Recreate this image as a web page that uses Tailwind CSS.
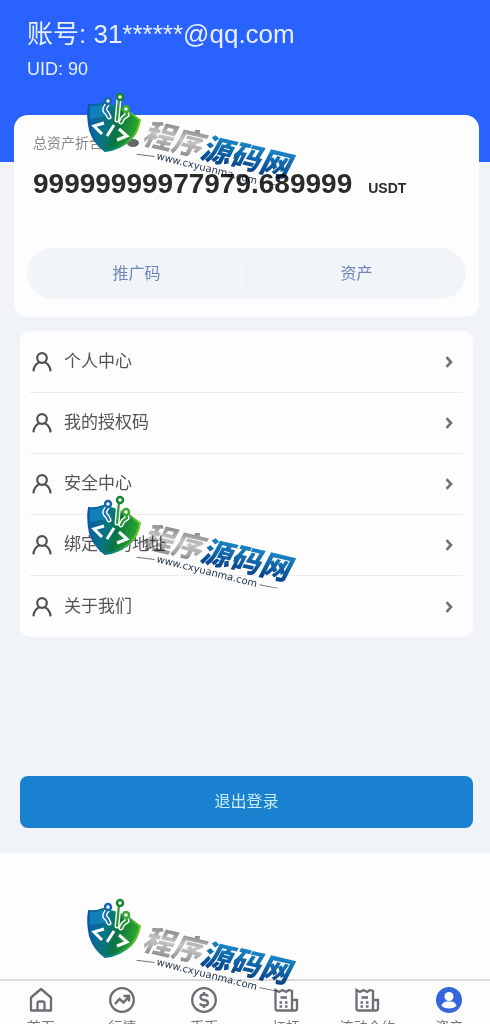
<!DOCTYPE html>
<html lang="zh-CN">
<head>
    <meta charset="UTF-8">
    <meta name="viewport" content="width=device-width, initial-scale=1.0">
    <title>个人中心</title>
    <script src="https://cdn.jsdelivr.net/npm/@tailwindcss/browser@4"></script>
</head>
<body class="relative h-screen flex flex-col overflow-hidden bg-[#fdfdfd] font-['Liberation_Sans','Noto_Sans_CJK_SC',sans-serif] text-[#555]">
    <!-- Shared icons -->
    <svg class="absolute w-0 h-0" aria-hidden="true">
        <symbol id="user" viewBox="0 0 20 20">
            <g fill="none" stroke="#505050" stroke-width="2.200" stroke-linecap="round">
                <circle cx="10" cy="6" r="4.800"/>
                <path d="M1.500 18.500C2 14.500 4 12 7 10.400M18.500 18.500C18 14.500 16 12 13 10.400"/>
            </g>
        </symbol>
        <symbol id="chevron" viewBox="0 0 8 12">
            <path d="M1.500 1.200L6 6L1.500 10.800" fill="none" stroke="#707070" stroke-width="2.600"/>
        </symbol>
        <symbol id="bill" viewBox="0 0 26 26">
            <g fill="none" stroke="#6d6d76" stroke-width="2.300">
                <path d="M19 23.500H4.500Q2.500 23.500 2.500 21.500V3L6 5L9.500 3L13 5L16 3L19 4V23.500H22Q24 23.500 24 21.500V13H19"/>
                <path d="M7.500 10.500H14M6.500 15.500H9M12 15.500H14.500M6.500 19.500H9M12 19.500H14.500"/>
            </g>
        </symbol>
        <symbol id="shield" viewBox="0 0 220 100">
            <defs>
                <linearGradient id="shieldFill" x1="0" y1="0" x2="1" y2="0.25">
                    <stop offset="0.1" stop-color="#0a62ad"/>
                    <stop offset="0.45" stop-color="#087580"/>
                    <stop offset="0.65" stop-color="#0b7440"/>
                    <stop offset="1" stop-color="#2aa52d"/>
                </linearGradient>
                <linearGradient id="shieldEdge" x1="0" y1="0" x2="1" y2="0">
                    <stop offset="0" stop-color="#0b55a8"/>
                    <stop offset="0.5" stop-color="#078a72"/>
                    <stop offset="1" stop-color="#70c824"/>
                </linearGradient>
            </defs>
            <path d="M9 16Q16 17 23 14L34 17L48 22Q54 27 60 31Q58 43 51 50Q41 60 25 62Q14 54 10 41Q7 27 9 16Z" fill="url(#shieldFill)" stroke="url(#shieldEdge)" stroke-width="2"/>
            <path d="M10 17Q17 18 22 15L27 27L10 30Z" fill="#1593c5" opacity="0.6"/>
            <g fill="none" stroke="#fff" stroke-width="5" stroke-linecap="round">
                <path d="M28 14L25 19Q24 22 27 24L29 28M39 10L37 31M46 22L47 26L43 29L41 33"/>
            </g>
            <g fill="none" stroke-width="2.200" stroke-linecap="round">
                <path d="M28 14L25 19Q24 22 27 24L29 28" stroke="#1b71b7"/>
                <path d="M39 10L37 31M46 22L47 26L43 29L41 33" stroke="#259b31"/>
            </g>
            <g fill="#fff" stroke-width="2.500">
                <circle cx="28" cy="12" r="3" stroke="#1765ae"/>
                <circle cx="40" cy="8" r="3" stroke="#14872f"/>
                <circle cx="46" cy="20" r="3" stroke="#39a934"/>
            </g>
            <path d="M24 34L14 37L22 45M34 36L27 47M39 40L47 47L37 51" fill="none" stroke="#fff" stroke-width="3"/>
        </symbol>
        <symbol id="brand" viewBox="0 0 220 100">
            <defs>
                <linearGradient id="silver" x1="0" y1="0" x2="0" y2="1">
                    <stop offset="0.2" stop-color="#858585"/>
                    <stop offset="0.5" stop-color="#c9c9c9"/>
                    <stop offset="0.9" stop-color="#8b8b8b"/>
                </linearGradient>
                <linearGradient id="blue" x1="0" y1="0" x2="0" y2="1">
                    <stop offset="0.2" stop-color="#1a8acb"/>
                    <stop offset="0.9" stop-color="#063f86"/>
                </linearGradient>
            </defs>
            <g transform="translate(61 54) rotate(13)" font-family="'Noto Sans CJK SC', sans-serif" font-weight="900" font-style="italic">
                <text x="0" y="0" font-size="30" fill="url(#silver)">程序</text>
                <text x="60" y="1" font-size="30" fill="url(#blue)">源码网</text>
            </g>
            <g transform="translate(76 70) rotate(14)">
                <text x="0" y="0" font-family="'DejaVu Sans', sans-serif" font-size="10" fill="#26384c">www.cxyuanma.com</text>
                <path d="M-20 0L-2 -2M106 -3L124 -4" stroke="#777" stroke-width="1"/>
            </g>
        </symbol>
    </svg>

    <main class="flex-1 min-h-0">
        <div class="bg-[#f0f4f9] pb-[25px]">
            <header class="h-[162px] bg-[#2962ff] text-[#e6f0ff] pl-[27px] pt-[18px]">
                <h1 class="text-[26px] leading-8">账号: 31******@qq.com</h1>
                <p class="text-lg leading-6 mt-[7px]">UID: 90</p>
            </header>

            <section class="-mt-[47px] ml-[14px] mr-[11px] h-[202px] rounded-[14px] bg-[#fdfdfd] px-[13px] pt-[18px]">
                <div class="flex items-center gap-6 pl-[6px] text-sm leading-5 text-[#888]">
                    <span>总资产折合</span>
                    <svg class="w-3 h-2" viewBox="0 0 12 8"><ellipse cx="6" cy="4" rx="6" ry="4" fill="#666"/></svg>
                </div>
                <div class="flex items-baseline gap-4 pl-[6px] mt-[15px] font-bold text-[#2b2b2b]">
                    <span class="text-[28px] leading-8">99999999977979.689999</span>
                    <span class="text-sm">USDT</span>
                </div>
                <div class="mt-12 h-[51px] rounded-full bg-[#f1f4f9] flex items-center text-[#6f86b8]">
                    <button class="flex-1 h-full">推广码</button>
                    <span class="w-px h-6 bg-[#e9edf4]"></span>
                    <button class="flex-1 h-full">资产</button>
                </div>
            </section>

            <nav class="mt-[14px] ml-5 mr-[17px] rounded-[10px] bg-[#fdfdfd] px-[10px] pt-px text-[17px]">
                <a href="#" class="h-[61px] flex items-center gap-3 pl-[2px] pr-[10px] border-b border-[#e9ebed]">
                    <svg class="w-5 h-5"><use href="#user"/></svg>
                    <span class="flex-1">个人中心</span>
                    <svg class="w-2 h-3"><use href="#chevron"/></svg>
                </a>
                <a href="#" class="h-[61px] flex items-center gap-3 pl-[2px] pr-[10px] border-b border-[#e9ebed]">
                    <svg class="w-5 h-5"><use href="#user"/></svg>
                    <span class="flex-1">我的授权码</span>
                    <svg class="w-2 h-3"><use href="#chevron"/></svg>
                </a>
                <a href="#" class="h-[61px] flex items-center gap-3 pl-[2px] pr-[10px] border-b border-[#e9ebed]">
                    <svg class="w-5 h-5"><use href="#user"/></svg>
                    <span class="flex-1">安全中心</span>
                    <svg class="w-2 h-3"><use href="#chevron"/></svg>
                </a>
                <a href="#" class="h-[61px] flex items-center gap-3 pl-[2px] pr-[10px] border-b border-[#e9ebed]">
                    <svg class="w-5 h-5"><use href="#user"/></svg>
                    <span class="flex-1">绑定我的地址</span>
                    <svg class="w-2 h-3"><use href="#chevron"/></svg>
                </a>
                <a href="#" class="h-[61px] flex items-center gap-3 pl-[2px] pr-[10px]">
                    <svg class="w-5 h-5"><use href="#user"/></svg>
                    <span class="flex-1">关于我们</span>
                    <svg class="w-2 h-3"><use href="#chevron"/></svg>
                </a>
            </nav>

            <div class="mt-[139px] ml-5 mr-[17px]">
                <button class="w-full h-[52px] rounded-lg bg-[#1a80d0] text-[#c9ebf8]">退出登录</button>
            </div>
        </div>
    </main>

    <!-- Tab bar -->
    <nav class="shrink-0 h-[45px] overflow-hidden border-t-2 border-[#dcdcdc] bg-[#fdfdfd] grid grid-cols-6 text-sm leading-5 text-[#777]">
        <a href="#" class="flex flex-col items-center gap-1 pt-[6px]">
            <svg class="w-[26px] h-[26px] shrink-0" viewBox="0 0 26 26" fill="none" stroke="#6d6d76" stroke-width="2.300" stroke-linejoin="round">
                <path d="M3 23.500V10.500L13 2L23 10.500V23.500ZM9.500 23V16.500Q9.500 14.500 11.500 14.500H14.500Q16.500 14.500 16.500 16.500V23"/>
            </svg>
            <span>首页</span>
        </a>
        <a href="#" class="flex flex-col items-center gap-1 pt-[6px]">
            <svg class="w-[26px] h-[26px] shrink-0" viewBox="0 0 26 26" fill="none" stroke="#6d6d76" stroke-width="2.300">
                <circle cx="13" cy="13" r="11.800"/>
                <path d="M6 17L10.500 12L14.500 15.500L19.500 10M14.500 9H20V14.500" stroke-width="2.500"/>
            </svg>
            <span>行情</span>
        </a>
        <a href="#" class="flex flex-col items-center gap-1 pt-[6px]">
            <svg class="w-[26px] h-[26px] shrink-0" viewBox="0 0 26 26" fill="none" stroke="#6d6d76" stroke-width="2.300">
                <circle cx="13" cy="13" r="11.800"/>
                <path d="M17 9.500Q16 7.500 13 7.500Q9.500 7.500 9.500 10Q9.500 12.500 13 13Q17 13.500 17 16Q17 18.500 13 18.500Q10 18.500 9 16.500M13 5V8M13 18V21"/>
            </svg>
            <span>币币</span>
        </a>
        <a href="#" class="flex flex-col items-center gap-1 pt-[6px]">
            <svg class="w-[26px] h-[26px] shrink-0"><use href="#bill"/></svg>
            <span>杠杆</span>
        </a>
        <a href="#" class="flex flex-col items-center gap-1 pt-[6px]">
            <svg class="w-[26px] h-[26px] shrink-0"><use href="#bill"/></svg>
            <span>流动合约</span>
        </a>
        <a href="#" class="flex flex-col items-center gap-1 pt-[6px]">
            <svg class="w-[26px] h-[26px] shrink-0" viewBox="0 0 26 26">
                <circle cx="13" cy="13" r="13" fill="#3567dc"/>
                <circle cx="13" cy="9.500" r="4.500" fill="#fff"/>
                <path d="M5.500 19Q6 15.500 10 14.500H16Q20 15.500 20.500 19Q17 21.500 13 21.500Q9 21.500 5.500 19Z" fill="#fff"/>
            </svg>
            <span>资产</span>
        </a>
    </nav>

    <!-- Site watermark, repeated over the page -->
    <svg class="absolute left-20 top-[89px] w-[220px] h-[100px] mix-blend-multiply pointer-events-none"><use href="#brand"/></svg>
    <svg class="absolute left-20 top-[89px] w-[220px] h-[100px] pointer-events-none"><use href="#shield"/></svg>
    <svg class="absolute left-20 top-[492px] w-[220px] h-[100px] mix-blend-multiply pointer-events-none"><use href="#brand"/></svg>
    <svg class="absolute left-20 top-[492px] w-[220px] h-[100px] pointer-events-none"><use href="#shield"/></svg>
    <svg class="absolute left-20 top-[895px] w-[220px] h-[100px] mix-blend-multiply pointer-events-none"><use href="#brand"/></svg>
    <svg class="absolute left-20 top-[895px] w-[220px] h-[100px] pointer-events-none"><use href="#shield"/></svg>
</body>
</html>
